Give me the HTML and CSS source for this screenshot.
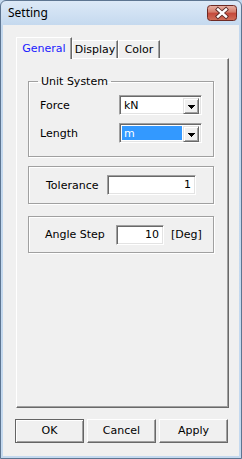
FILE: index.html
```html
<!DOCTYPE html>
<html>
<head>
<meta charset="utf-8">
<link rel="stylesheet" href="styles.css">
</head>
<body>
<div class="window">
  <div class="titlebar">
    <span class="title">Setting</span>
    <div class="close">
      <svg width="30" height="16" viewBox="0 0 30 16">
        <defs>
          <linearGradient id="cg" x1="0" y1="0" x2="0" y2="1">
            <stop offset="0" stop-color="#e8b2a6"/>
            <stop offset="0.45" stop-color="#d47c6a"/>
            <stop offset="0.5" stop-color="#c4483a"/>
            <stop offset="1" stop-color="#d0705a"/>
          </linearGradient>
        </defs>
        <rect x="0.5" y="0.5" width="29" height="15" rx="3" fill="url(#cg)" stroke="#6e2a24"/>
        <path d="M11 4.5 L19 11.5 M19 4.5 L11 11.5" stroke="#5a2a26" stroke-width="4.2" stroke-linecap="square"/>
        <path d="M11 4.5 L19 11.5 M19 4.5 L11 11.5" stroke="#ffffff" stroke-width="2.4" stroke-linecap="square"/>
      </svg>
    </div>
  </div>
  <div class="client">
    <div class="tabs">
      <div class="tab active w1">General</div>
      <div class="tab w2">Display</div>
      <div class="tab w3">Color</div>
    </div>
    <div class="pane">
      <fieldset class="group unit">
        <legend>Unit System</legend>
        <div class="row">
          <span class="lbl">Force</span>
          <div class="combo"><span class="val">kN</span><span class="drop"><svg class="tri" width="7" height="4" viewBox="0 0 7 4" shape-rendering="crispEdges"><rect x="0" y="0" width="7" height="1"/><rect x="1" y="1" width="5" height="1"/><rect x="2" y="2" width="3" height="1"/><rect x="3" y="3" width="1" height="1"/></svg></span></div>
        </div>
        <div class="row">
          <span class="lbl">Length</span>
          <div class="combo"><span class="val sel">m</span><span class="drop"><svg class="tri" width="7" height="4" viewBox="0 0 7 4" shape-rendering="crispEdges"><rect x="0" y="0" width="7" height="1"/><rect x="1" y="1" width="5" height="1"/><rect x="2" y="2" width="3" height="1"/><rect x="3" y="3" width="1" height="1"/></svg></span></div>
        </div>
      </fieldset>
      <div class="group tol">
        <span class="lbl2">Tolerance</span>
        <div class="input wide">1</div>
      </div>
      <div class="group ang">
        <span class="lbl3">Angle Step</span>
        <div class="input narrow">10</div>
        <span class="unit-txt">[Deg]</span>
      </div>
    </div>
    <div class="buttons">
      <div class="btn default">OK</div>
      <div class="btn">Cancel</div>
      <div class="btn">Apply</div>
    </div>
  </div>
</div>
</body>
</html>
```

FILE: styles.css
```css
* { box-sizing: border-box; }
html, body { margin: 0; padding: 0; background: #c4d9ef; }
body {
  font-family: "DejaVu Sans", sans-serif;
  font-size: 11px;
  color: #000;
}
.window {
  width: 242px;
  height: 459px;
  border: 1px solid #5d7591;
  border-radius: 6px 6px 0 0;
  background: linear-gradient(#dce9f7, #c3d8ee 26px, #c4d9ef);
  padding: 0 2px 2px 2px;
  display: flex;
  flex-direction: column;
}
.titlebar {
  height: 24px;
  display: flex;
  align-items: flex-start;
  justify-content: space-between;
}
.title {
  font-family: "Noto Sans", sans-serif;
  font-size: 12px;
  padding-left: 5px;
  padding-top: 4px;
  line-height: 16px;
}
.close {
  margin-top: 4px;
  margin-right: 2px;
  height: 16px;
  display: flex;
}
.client {
  flex: 1;
  background: #f0f0f0;
  padding: 12px 0 0 13px;
  display: flex;
  flex-direction: column;
}
.tabs {
  display: flex;
  align-items: flex-end;
  height: 21px;
}
.tab {
  height: 18px;
  background: #f0f0f0;
  border-top: 1px solid #fff;
  border-left: 1px solid #fff;
  border-right: 1px solid #696969;
  box-shadow: inset -1px 0 0 #a0a0a0;
  text-align: center;
  line-height: 16px;
  padding-top: 1px;
}
.tab.active {
  height: 22px;
  margin-bottom: -1px;
  position: relative;
  z-index: 1;
  color: #1a1aff;
  line-height: 18px;
  padding-top: 2px;
}
.w1 { width: 56px; }
.w2 { width: 46px; }
.w3 { width: 42px; }
.pane {
  width: 213px;
  height: 350px;
  border-top: 1px solid #fff;
  border-left: 1px solid #fff;
  border-right: 1px solid #696969;
  border-bottom: 1px solid #696969;
  box-shadow: inset -1px -1px 0 #a0a0a0;
  padding: 16px 0 0 11px;
  display: flex;
  flex-direction: column;
}
.group {
  width: 186px;
  border: 1px solid #a0a0a0;
  box-shadow: 1px 1px 0 #fff, inset 1px 1px 0 #fff;
  margin: 0;
}
fieldset.unit {
  padding: 7px 0 13px 9px;
  min-width: 0;
  display: flex;
  flex-direction: column;
  gap: 8px;
}
legend {
  padding: 0 3px;
  line-height: 13px;
}
.row {
  display: flex;
  align-items: center;
  height: 20px;
}
.lbl {
  width: 81px;
  padding-left: 2px;
}
.combo {
  width: 83px;
  height: 20px;
  background: #fff;
  border-top: 1px solid #a0a0a0;
  border-left: 1px solid #a0a0a0;
  border-right: 1px solid #fff;
  border-bottom: 1px solid #fff;
  box-shadow: inset 1px 1px 0 #696969, inset -1px -1px 0 #e3e3e3;
  display: flex;
  padding: 2px;
}
.val {
  flex: 1;
  line-height: 16px;
  padding-left: 2px;
  margin-right: 1px;
}
.val.sel {
  background: #3399ff;
  color: #fff;
}
.drop {
  width: 16px;
  height: 16px;
  background: #f0f0f0;
  border-top: 1px solid #e3e3e3;
  border-left: 1px solid #e3e3e3;
  border-right: 1px solid #696969;
  border-bottom: 1px solid #696969;
  box-shadow: inset 1px 1px 0 #fff, inset -1px -1px 0 #a0a0a0;
  display: flex;
  align-items: center;
  justify-content: center;
}
.tri {
  display: block;
  fill: #000;
  margin-top: 1px;
}
.tol {
  margin-top: 9px;
  height: 38px;
  display: flex;
  align-items: center;
  padding-left: 17px;
}
.lbl2 { width: 61px; }
.ang {
  margin-top: 12px;
  height: 37px;
  display: flex;
  align-items: center;
  padding-left: 16px;
}
.lbl3 { width: 71px; }
.input {
  height: 20px;
  background: #fff;
  border-top: 1px solid #a0a0a0;
  border-left: 1px solid #a0a0a0;
  border-right: 1px solid #fff;
  border-bottom: 1px solid #fff;
  box-shadow: inset 1px 1px 0 #696969, inset -1px -1px 0 #e3e3e3;
  text-align: right;
  line-height: 18px;
  padding-right: 4px;
}
.wide { width: 89px; }
.narrow { width: 48px; }
.unit-txt { margin-left: 7px; }
.buttons {
  display: flex;
  gap: 3px;
  margin-top: 11px;
  margin-left: -1px;
}
.btn {
  width: 69px;
  height: 24px;
  background: #f0f0f0;
  border-top: 1px solid #fff;
  border-left: 1px solid #fff;
  border-right: 1px solid #696969;
  border-bottom: 1px solid #696969;
  box-shadow: inset -1px -1px 0 #a0a0a0;
  text-align: center;
  line-height: 21px;
}
.btn.default {
  border: 1px solid #646464;
  box-shadow: inset 1px 1px 0 #fff, inset -1px -1px 0 #a0a0a0;
}
```
